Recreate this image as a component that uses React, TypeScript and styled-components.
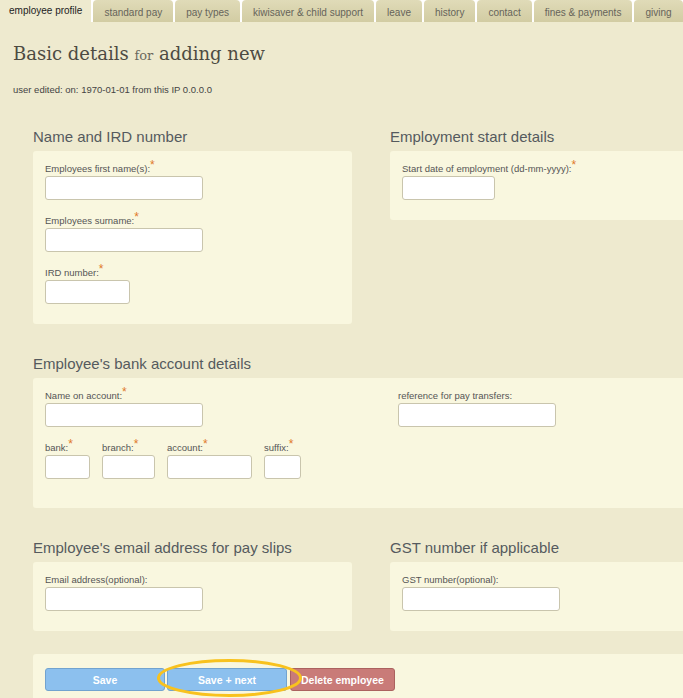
import React from "react";
import styled, { createGlobalStyle } from "styled-components";

const tabList = [
  "employee profile",
  "standard pay",
  "pay types",
  "kiwisaver & child support",
  "leave",
  "history",
  "contact",
  "fines & payments",
  "giving",
];

const GlobalStyle = createGlobalStyle`
  html, body {
    margin: 0;
    padding: 0;
    overflow: hidden;
    background: #eeeacf;
  }
  body {
    font-family: "Liberation Sans", Arial, sans-serif;
  }
`;

const Req = () => <Star>*</Star>;

const App = () => {
  return (
    <Page>
      <GlobalStyle />
      <TabBar>
        {tabList.map((tab, index) => (
          <Tab key={tab} $active={index === 0}>
            {tab}
          </Tab>
        ))}
      </TabBar>

      <Content>
        <Title>
          Basic details <small>for</small> adding new
        </Title>
        <Meta>user edited: on: 1970-01-01 from this IP 0.0.0.0</Meta>

        <Sections>
          <Section>
            <SectionTitle>Name and IRD number</SectionTitle>
            <Panel>
              <Field>
                <Label>
                  Employees first name(s):<Req />
                </Label>
                <Input $width={158} />
              </Field>
              <Field>
                <Label>
                  Employees surname:<Req />
                </Label>
                <Input $width={158} />
              </Field>
              <Field>
                <Label>
                  IRD number:<Req />
                </Label>
                <Input $width={85} />
              </Field>
            </Panel>
          </Section>

          <Section>
            <SectionTitle>Employment start details</SectionTitle>
            <Panel>
              <Field>
                <Label>
                  Start date of employment (dd-mm-yyyy):<Req />
                </Label>
                <Input $width={93} />
              </Field>
            </Panel>
          </Section>

          <Section $wide>
            <SectionTitle>Employee's bank account details</SectionTitle>
            <Panel $padBottom={29}>
              <BankGrid>
                <Column>
                  <Field>
                    <Label>
                      Name on account:<Req />
                    </Label>
                    <Input $width={158} />
                  </Field>
                  <BankRow>
                    <Field>
                      <Label>
                        bank:<Req />
                      </Label>
                      <Input $width={45} />
                    </Field>
                    <Field>
                      <Label>
                        branch:<Req />
                      </Label>
                      <Input $width={53} />
                    </Field>
                    <Field>
                      <Label>
                        account:<Req />
                      </Label>
                      <Input $width={85} />
                    </Field>
                    <Field>
                      <Label>
                        suffix:<Req />
                      </Label>
                      <Input $width={37} />
                    </Field>
                  </BankRow>
                </Column>
                <Column>
                  <Field>
                    <Label>reference for pay transfers:</Label>
                    <Input $width={158} />
                  </Field>
                </Column>
              </BankGrid>
            </Panel>
          </Section>

          <Section>
            <SectionTitle>Employee's email address for pay slips</SectionTitle>
            <Panel>
              <Field>
                <Label>Email address(optional):</Label>
                <Input $width={158} />
              </Field>
            </Panel>
          </Section>

          <Section>
            <SectionTitle>GST number if applicable</SectionTitle>
            <Panel>
              <Field>
                <Label>GST number(optional):</Label>
                <Input $width={158} />
              </Field>
            </Panel>
          </Section>
        </Sections>

        <ButtonPanel>
          <Button $variant="primary">Save</Button>
          <Button $variant="primary">Save + next</Button>
          <Button $variant="danger">Delete employee</Button>
          <Highlight width="145" height="38" viewBox="0 0 145 38">
            <ellipse
              cx="72.5"
              cy="19"
              rx="71"
              ry="17.5"
              fill="none"
              stroke="#f8c21e"
              strokeWidth="3"
            />
          </Highlight>
        </ButtonPanel>
      </Content>
    </Page>
  );
};

export default App;

const Page = styled.div`
  width: 720px;
  min-height: 698px;
  background: #eeeacf;
  color: #555;
`;

const TabBar = styled.div`
  display: flex;
  gap: 2px;
  height: 22px;
  background: #fff;
`;

const Tab = styled.div<{ $active?: boolean }>`
  flex: none;
  display: flex;
  align-items: center;
  height: 22px;
  box-sizing: border-box;
  white-space: nowrap;
  font-size: 10px;
  padding: ${(p) => (p.$active ? "0 9px 2px 9px" : "3px 11px 0")};
  color: ${(p) => (p.$active ? "#222" : "#66645a")};
  border-radius: ${(p) => (p.$active ? "0" : "4px 4px 0 0")};
  background: ${(p) =>
    p.$active ? "#eeeacf" : "linear-gradient(#e0dbb8, #d2cca3)"};
`;

const Content = styled.div`
  padding: 0 13px;
`;

const Title = styled.h1`
  margin: 20px 0 0;
  font-family: "DejaVu Serif", "Liberation Serif", serif;
  font-weight: normal;
  font-size: 18px;
  line-height: 24px;
  color: #4d4b42;

  small {
    font-size: 13px;
    color: #6b695e;
  }
`;

const Meta = styled.div`
  margin-top: 16px;
  font-size: 9.5px;
  line-height: 12px;
  color: #444;
`;

const Sections = styled.div`
  display: grid;
  grid-template-columns: 319px 319px;
  column-gap: 38px;
  row-gap: 31px;
  align-items: start;
  margin: 32px 0 0 20px;
`;

const Section = styled.section<{ $wide?: boolean }>`
  display: flex;
  flex-direction: column;
  grid-column: ${(p) => (p.$wide ? "1 / -1" : "auto")};
`;

const SectionTitle = styled.h2`
  margin: 0 0 5px;
  font-weight: normal;
  font-size: 15px;
  line-height: 18px;
  color: #555a5e;
`;

const Panel = styled.div<{ $padBottom?: number }>`
  display: flex;
  flex-direction: column;
  gap: 14px;
  background: #f9f7df;
  border-radius: 3px;
  padding: 11px 12px ${(p) => p.$padBottom ?? 20}px;
`;

const Field = styled.div`
  display: flex;
  flex-direction: column;
`;

const Label = styled.label`
  font-size: 9.5px;
  line-height: 14px;
  color: #555;
  white-space: nowrap;
`;

const Star = styled.span`
  color: #e0792a;
  font-size: 12px;
  line-height: 0;
  position: relative;
  top: -3px;
`;

const Input = styled.input<{ $width: number }>`
  box-sizing: border-box;
  width: ${(p) => p.$width}px;
  height: 24px;
  margin: 0;
  background: #fff;
  border: 1px solid #c9c5ad;
  border-radius: 3px;
`;

const BankGrid = styled.div`
  display: grid;
  grid-template-columns: 353px 1fr;
`;

const Column = styled.div`
  display: flex;
  flex-direction: column;
  gap: 14px;
`;

const BankRow = styled.div`
  display: flex;
  gap: 12px;
`;

const ButtonPanel = styled.div`
  position: relative;
  display: flex;
  align-items: center;
  gap: 2px;
  margin: 23px 0 0 20px;
  width: 676px;
  box-sizing: border-box;
  padding: 14px 12px 20px;
  background: #f9f7df;
  border-radius: 3px;
`;

const Button = styled.button<{ $variant: "primary" | "danger" }>`
  box-sizing: border-box;
  height: 23px;
  width: ${(p) => (p.$variant === "primary" ? "120px" : "auto")};
  margin-left: ${(p) => (p.$variant === "danger" ? "1px" : "0")};
  padding: 0 10px;
  font-family: "Liberation Sans", Arial, sans-serif;
  font-weight: bold;
  font-size: 10.5px;
  color: #fff;
  border-radius: 3px;
  border: 1px solid
    ${(p) => (p.$variant === "primary" ? "#72a3cf" : "#ab625f")};
  background: ${(p) => (p.$variant === "primary" ? "#8cc0ee" : "#c97b78")};
`;

const Highlight = styled.svg`
  position: absolute;
  left: 124px;
  top: 5px;
  overflow: visible;
  pointer-events: none;
`;
